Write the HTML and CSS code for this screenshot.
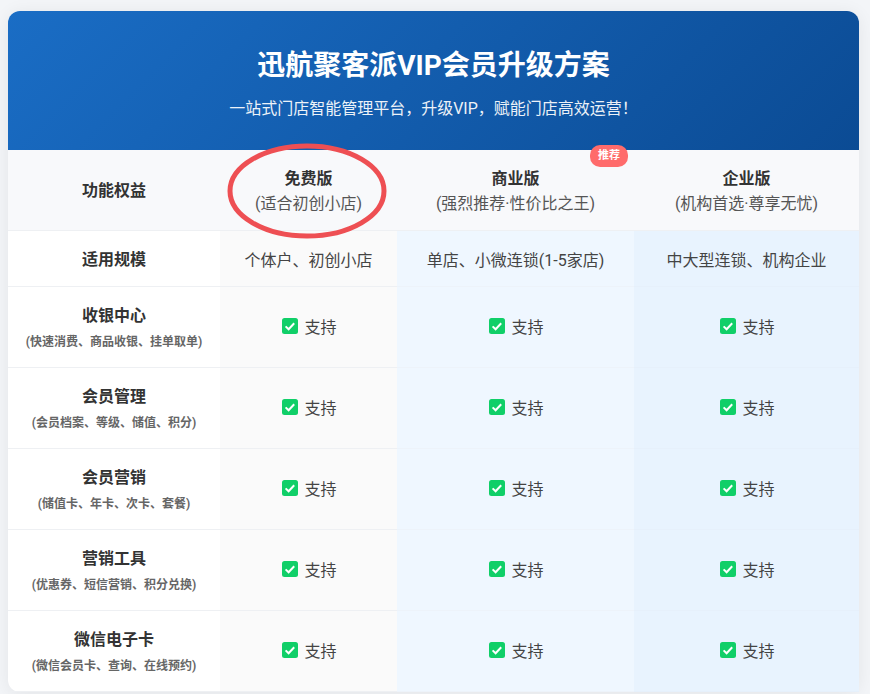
FILE: index.html
```html
<!DOCTYPE html>
<html lang="zh-CN">
<head>
<meta charset="utf-8">
<title>迅航聚客派VIP会员升级方案</title>
<link rel="stylesheet" href="styles.css">
</head>
<body>
<main class="card">
  <header class="hero">
    <h1>迅航聚客派VIP会员升级方案</h1>
    <p>一站式门店智能管理平台&#65292;升级VIP&#65292;赋能门店高效运营&#65281;</p>
  </header>
  <table class="plans">
    <colgroup><col class="c1"><col class="c2"><col class="c3"><col class="c4"></colgroup>
    <thead>
      <tr>
        <th class="feat-head">功能权益</th>
        <th class="free-head"><b>免费版</b><span>(适合初创小店)</span>
          <svg class="circle" viewBox="0 0 160 96" aria-hidden="true"><ellipse cx="80" cy="48" rx="77" ry="45" fill="none" stroke="#ee4f53" stroke-width="5"/></svg>
        </th>
        <th class="biz-head"><b>商业版</b><span>(强烈推荐·性价比之王)</span><em class="badge">推荐</em></th>
        <th><b>企业版</b><span>(机构首选·尊享无忧)</span></th>
      </tr>
    </thead>
    <tbody>
      <tr class="scale">
        <th>适用规模</th>
        <td class="free">个体户、初创小店</td>
        <td class="biz">单店、小微连锁(1-5家店)</td>
        <td class="ent">中大型连锁、机构企业</td>
      </tr>
      <tr>
        <th>收银中心<small>(快速消费、商品收银、挂单取单)</small></th>
        <td class="free"><span class="ok"><svg viewBox="0 0 16 16"><rect width="16" height="16" rx="2.5" fill="#10cf68"/><path d="M3.6 8.4l3 2.9 5.6-6" fill="none" stroke="#fff" stroke-width="2"/></svg>支持</span></td>
        <td class="biz"><span class="ok"><svg viewBox="0 0 16 16"><rect width="16" height="16" rx="2.5" fill="#10cf68"/><path d="M3.6 8.4l3 2.9 5.6-6" fill="none" stroke="#fff" stroke-width="2"/></svg>支持</span></td>
        <td class="ent"><span class="ok"><svg viewBox="0 0 16 16"><rect width="16" height="16" rx="2.5" fill="#10cf68"/><path d="M3.6 8.4l3 2.9 5.6-6" fill="none" stroke="#fff" stroke-width="2"/></svg>支持</span></td>
      </tr>
      <tr>
        <th>会员管理<small>(会员档案、等级、储值、积分)</small></th>
        <td class="free"><span class="ok"><svg viewBox="0 0 16 16"><rect width="16" height="16" rx="2.5" fill="#10cf68"/><path d="M3.6 8.4l3 2.9 5.6-6" fill="none" stroke="#fff" stroke-width="2"/></svg>支持</span></td>
        <td class="biz"><span class="ok"><svg viewBox="0 0 16 16"><rect width="16" height="16" rx="2.5" fill="#10cf68"/><path d="M3.6 8.4l3 2.9 5.6-6" fill="none" stroke="#fff" stroke-width="2"/></svg>支持</span></td>
        <td class="ent"><span class="ok"><svg viewBox="0 0 16 16"><rect width="16" height="16" rx="2.5" fill="#10cf68"/><path d="M3.6 8.4l3 2.9 5.6-6" fill="none" stroke="#fff" stroke-width="2"/></svg>支持</span></td>
      </tr>
      <tr>
        <th>会员营销<small>(储值卡、年卡、次卡、套餐)</small></th>
        <td class="free"><span class="ok"><svg viewBox="0 0 16 16"><rect width="16" height="16" rx="2.5" fill="#10cf68"/><path d="M3.6 8.4l3 2.9 5.6-6" fill="none" stroke="#fff" stroke-width="2"/></svg>支持</span></td>
        <td class="biz"><span class="ok"><svg viewBox="0 0 16 16"><rect width="16" height="16" rx="2.5" fill="#10cf68"/><path d="M3.6 8.4l3 2.9 5.6-6" fill="none" stroke="#fff" stroke-width="2"/></svg>支持</span></td>
        <td class="ent"><span class="ok"><svg viewBox="0 0 16 16"><rect width="16" height="16" rx="2.5" fill="#10cf68"/><path d="M3.6 8.4l3 2.9 5.6-6" fill="none" stroke="#fff" stroke-width="2"/></svg>支持</span></td>
      </tr>
      <tr>
        <th>营销工具<small>(优惠券、短信营销、积分兑换)</small></th>
        <td class="free"><span class="ok"><svg viewBox="0 0 16 16"><rect width="16" height="16" rx="2.5" fill="#10cf68"/><path d="M3.6 8.4l3 2.9 5.6-6" fill="none" stroke="#fff" stroke-width="2"/></svg>支持</span></td>
        <td class="biz"><span class="ok"><svg viewBox="0 0 16 16"><rect width="16" height="16" rx="2.5" fill="#10cf68"/><path d="M3.6 8.4l3 2.9 5.6-6" fill="none" stroke="#fff" stroke-width="2"/></svg>支持</span></td>
        <td class="ent"><span class="ok"><svg viewBox="0 0 16 16"><rect width="16" height="16" rx="2.5" fill="#10cf68"/><path d="M3.6 8.4l3 2.9 5.6-6" fill="none" stroke="#fff" stroke-width="2"/></svg>支持</span></td>
      </tr>
      <tr>
        <th>微信电子卡<small>(微信会员卡、查询、在线预约)</small></th>
        <td class="free"><span class="ok"><svg viewBox="0 0 16 16"><rect width="16" height="16" rx="2.5" fill="#10cf68"/><path d="M3.6 8.4l3 2.9 5.6-6" fill="none" stroke="#fff" stroke-width="2"/></svg>支持</span></td>
        <td class="biz"><span class="ok"><svg viewBox="0 0 16 16"><rect width="16" height="16" rx="2.5" fill="#10cf68"/><path d="M3.6 8.4l3 2.9 5.6-6" fill="none" stroke="#fff" stroke-width="2"/></svg>支持</span></td>
        <td class="ent"><span class="ok"><svg viewBox="0 0 16 16"><rect width="16" height="16" rx="2.5" fill="#10cf68"/><path d="M3.6 8.4l3 2.9 5.6-6" fill="none" stroke="#fff" stroke-width="2"/></svg>支持</span></td>
      </tr>
    </tbody>
  </table>
</main>
</body>
</html>
```
FILE: styles.css
```css
* { box-sizing: border-box; }
html, body { height: 100%; overflow: hidden; }
body {
  margin: 0;
  padding: 11px 11px 0 8px;
  background: #f3f5f8;
  color: #333;
  font-family: Roboto, "Noto Sans CJK SC", sans-serif;
  font-size: 16px;
}
.card {
  background: #fff;
  border-radius: 12px;
  box-shadow: 0 2px 18px rgba(0, 0, 0, 0.07);
}
.hero {
  height: 139px;
  padding-top: 32px;
  text-align: center;
  color: #fff;
  background: linear-gradient(135deg, #1a6dc5, #0b4b94);
  border-radius: 12px 12px 0 0;
}
.hero h1 {
  margin: 0;
  font-size: 28px;
  line-height: 46px;
  font-weight: 700;
}
.hero p {
  margin: 8px 0 0;
  font-size: 16px;
  line-height: 24px;
  opacity: 0.92;
}
.plans {
  width: 851px;
  table-layout: fixed;
  border-collapse: collapse;
}
.c1 { width: 212px; }
.c2 { width: 177px; }
.c3 { width: 237px; }
.c4 { width: 225px; }
.plans th, .plans td {
  padding: 0;
  text-align: center;
  vertical-align: middle;
  border-bottom: 1px solid #eef0f3;
}
.plans thead th {
  height: 80px;
  padding-top: 4px;
  background: #f8f9fb;
  font-weight: 400;
}
.plans thead .feat-head { padding-top: 2px; }
thead th b, .plans thead .feat-head { font-weight: 700; color: #333; font-size: 16px; line-height: 24px; }
thead th b { display: block; }
thead th span { display: block; color: #555; font-size: 16px; line-height: 24px; margin-top: 1px; }
.free-head, .biz-head { position: relative; }
.circle {
  position: absolute;
  left: 7px;
  top: -7px;
  width: 160px;
  height: 96px;
}
.badge {
  position: absolute;
  right: 6px;
  top: -5px;
  width: 38px;
  height: 22px;
  border-radius: 10px;
  background: #ff6b6b;
  color: #fff;
  font-size: 11px;
  font-weight: 700;
  font-style: normal;
  line-height: 22px;
}
.plans tbody th { padding-top: 1px; font-weight: 700; font-size: 16px; line-height: 24px; height: 81px; color: #333; }
tbody th small {
  display: block;
  margin-top: 5px;
  font-size: 12px;
  line-height: 18px;
  font-weight: 700;
  color: #666;
}
.plans td { color: #444; padding-bottom: 2px; }
.plans .scale th { height: 56px; padding-top: 4px; }
.plans .scale td { height: 56px; padding-top: 2px; padding-bottom: 0; }
.plans .free { background: #fafafa; }
.plans .biz { background: #eff7ff; border-bottom-color: #edf3fa; }
.plans .ent { background: #e8f3fe; border-bottom-color: #e6f0fb; }
.ok { display: inline-flex; align-items: center; gap: 6px; padding-left: 2px; color: #444; }
.ok svg { width: 16px; height: 16px; }
```
